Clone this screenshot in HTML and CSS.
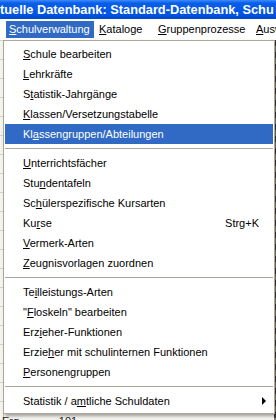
FILE: index.html
```html
<!DOCTYPE html>
<html lang="de">
<head>
<meta charset="utf-8">
<title>Schulverwaltung</title>
<link rel="stylesheet" href="styles.css">
</head>
<body>
<div class="title">tuelle Datenbank: Standard-Datenbank, Schu</div>
<div class="menubar">
  <div class="mb mb1 active"><u>S</u>chulverwaltung</div>
  <div class="mb mb2"><u>K</u>ataloge</div>
  <div class="mb mb3"><u>G</u>ruppenprozesse</div>
  <div class="mb mb4"><u>A</u>usw</div>
</div>
<div class="content">
  <div class="leftstrip"></div>
  <div class="rightstrip"></div>
  <div class="bottomtext">Erg &nbsp; &nbsp; &nbsp; &nbsp; &nbsp; &nbsp; 101</div>
  <div class="menu">
    <div class="item"><span><u>S</u>chule bearbeiten</span></div>
    <div class="item"><span><u>L</u>ehrkräfte</span></div>
    <div class="item"><span>S<u>t</u>atistik-Jahrgänge</span></div>
    <div class="item"><span><u>K</u>lassen/Versetzungstabelle</span></div>
    <div class="item hl"><span>Kl<u>a</u>ssengruppen/Abteilungen</span></div>
    <div class="sep"></div>
    <div class="item"><span><u>U</u>nterrichtsfächer</span></div>
    <div class="item"><span>Stu<u>n</u>dentafeln</span></div>
    <div class="item"><span>Sc<u>h</u>ülerspezifische Kursarten</span></div>
    <div class="item"><span>Ku<u>r</u>se</span><span class="key">Strg+K</span></div>
    <div class="item"><span><u>V</u>ermerk-Arten</span></div>
    <div class="item"><span><u>Z</u>eugnisvorlagen zuordnen</span></div>
    <div class="sep"></div>
    <div class="item"><span>Te<u>i</u>lleistungs-Arten</span></div>
    <div class="item"><span>"<u>F</u>loskeln" bearbeiten</span></div>
    <div class="item"><span>Erz<u>i</u>eher-Funktionen</span></div>
    <div class="item"><span>Erzie<u>h</u>er mit schulinternen Funktionen</span></div>
    <div class="item"><span><u>P</u>ersonengruppen</span></div>
    <div class="sep"></div>
    <div class="item"><span>Statistik / a<u>m</u>tliche Schuldaten</span><span class="arrow"></span></div>
  </div>
</div>
</body>
</html>
```
FILE: styles.css
```css
html, body {
  margin: 0;
  padding: 0;
}
body {
  width: 276px;
  height: 420px;
  overflow: hidden;
  background: #ece9d8;
  font-family: "Liberation Sans", Arial, sans-serif;
  font-size: 11px;
  color: #000;
}
u {
  text-decoration: underline;
  text-underline-offset: 1px;
}
.title {
  height: 19px;
  line-height: 19px;
  background: linear-gradient(#3d8cf7 0, #0a5eea 3px, #0055e3 14px, #0048cc 19px);
  color: #fff;
  font-weight: bold;
  font-size: 12.8px;
  white-space: nowrap;
  overflow: hidden;
}
.menubar {
  height: 21px;
  display: flex;
  align-items: center;
  background: #fff;
  white-space: nowrap;
  overflow: hidden;
}
.mb {
  height: 17px;
  line-height: 17px;
  padding-left: 5px;
  flex: none;
}
.mb1 {
  margin-left: 6px;
  width: 85px;
  padding-left: 3px;
}
.mb2 { width: 54px; }
.mb3 { width: 93px; }
.active {
  background: #316ac5;
  color: #fff;
}
.content {
  position: relative;
  height: 380px;
  background: #f4f3ee;
}
.leftstrip {
  position: absolute;
  left: 0;
  top: 0;
  width: 3px;
  height: 380px;
  background: repeating-linear-gradient(#d6d3c6 0, #d6d3c6 1px, #f4f3ee 1px, #f4f3ee 19px);
  border-right: 1px solid #c9c6b8;
}
.rightstrip {
  position: absolute;
  right: 0;
  top: 0;
  width: 2px;
  height: 380px;
  background: repeating-linear-gradient(#3a3a3a 0, #3a3a3a 6px, #8d8a7c 6px, #8d8a7c 12px);
}
.bottomtext {
  position: absolute;
  left: 2px;
  top: 375px;
  font-size: 11px;
  line-height: 12px;
  color: #222;
  white-space: nowrap;
}
.menu {
  position: absolute;
  left: 3px;
  top: 0;
  width: 268px;
  border: 1px solid #aca899;
  background: #fff;
  padding: 3px 1px 2px 1px;
  box-shadow: 2px 2px 3px rgba(0, 0, 0, 0.35);
}
.item {
  height: 20px;
  line-height: 20px;
  padding: 0 14px 0 18px;
  display: flex;
  justify-content: space-between;
  align-items: center;
  white-space: nowrap;
}
.hl {
  background: #316ac5;
  color: #fff;
}
.arrow {
  width: 0;
  height: 0;
  border-left: 4px solid #000;
  border-top: 4px solid transparent;
  border-bottom: 4px solid transparent;
  margin-right: -7px;
}
.sep {
  height: 1px;
  margin: 4px 0;
  background: #aca899;
}
```
